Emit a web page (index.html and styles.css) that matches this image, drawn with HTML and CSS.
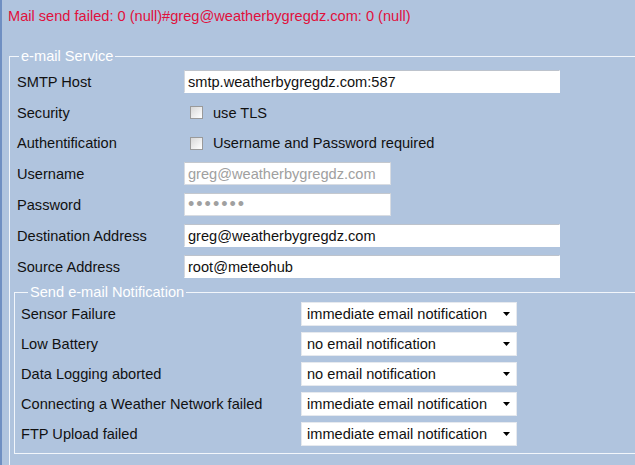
FILE: index.html
```html
<!DOCTYPE html>
<html>
<head>
<meta charset="utf-8">
<link rel="stylesheet" href="styles.css">
</head>
<body>
<div class="page">
  <p class="error">Mail send failed: 0 (null)#greg@weatherbygregdz.com: 0 (null)</p>
  <fieldset class="service">
    <legend>e-mail Service</legend>
    <div class="grid">
      <label class="lbl">SMTP Host</label>
      <div class="ctl"><input class="txt wide" type="text" value="smtp.weatherbygregdz.com:587"></div>

      <label class="lbl">Security</label>
      <div class="ctl"><input class="cb" type="checkbox"><span class="cbtext">use TLS</span></div>

      <label class="lbl">Authentification</label>
      <div class="ctl"><input class="cb" type="checkbox"><span class="cbtext">Username and Password required</span></div>

      <label class="lbl">Username</label>
      <div class="ctl"><input class="txt narrow dis" type="text" value="greg@weatherbygregdz.com" disabled></div>

      <label class="lbl">Password</label>
      <div class="ctl"><input class="txt narrow dis pw" type="password" value="1234567" disabled></div>

      <label class="lbl">Destination Address</label>
      <div class="ctl"><input class="txt wide" type="text" value="greg@weatherbygregdz.com"></div>

      <label class="lbl">Source Address</label>
      <div class="ctl"><input class="txt wide" type="text" value="root@meteohub"></div>
    </div>

    <fieldset class="notify">
      <legend>Send e-mail Notification</legend>
      <div class="ngrid">
        <span class="lbl">Sensor Failure</span>
        <div class="sel"><span>immediate email notification</span><svg class="arr" width="7" height="4" viewBox="0 0 7 4"><path d="M0 0h7L3.5 4z" fill="#000"/></svg></div>

        <span class="lbl">Low Battery</span>
        <div class="sel"><span>no email notification</span><svg class="arr" width="7" height="4" viewBox="0 0 7 4"><path d="M0 0h7L3.5 4z" fill="#000"/></svg></div>

        <span class="lbl">Data Logging aborted</span>
        <div class="sel"><span>no email notification</span><svg class="arr" width="7" height="4" viewBox="0 0 7 4"><path d="M0 0h7L3.5 4z" fill="#000"/></svg></div>

        <span class="lbl">Connecting a Weather Network failed</span>
        <div class="sel"><span>immediate email notification</span><svg class="arr" width="7" height="4" viewBox="0 0 7 4"><path d="M0 0h7L3.5 4z" fill="#000"/></svg></div>

        <span class="lbl">FTP Upload failed</span>
        <div class="sel"><span>immediate email notification</span><svg class="arr" width="7" height="4" viewBox="0 0 7 4"><path d="M0 0h7L3.5 4z" fill="#000"/></svg></div>
      </div>
    </fieldset>
  </fieldset>
</div>
</body>
</html>
```

FILE: styles.css
```css
html, body {
  margin: 0;
  padding: 0;
  background: #b0c4de;
  overflow: hidden;
  width: 635px;
  height: 465px;
}

.page {
  box-sizing: border-box;
  height: 465px;
  border-left: 2px solid #6f8fc2;
  padding: 8px 0 0 6px;
  font-family: "Liberation Sans", Arial, sans-serif;
  font-size: 14.6px;
  color: #111;
}

.error {
  margin: 0 0 24px 0;
  line-height: 16px;
  color: #e0103c;
  white-space: nowrap;
}

fieldset {
  border: 1px solid #f2f6fb;
  margin: 0;
}

legend {
  color: #fff;
  padding: 0 2px;
  line-height: 16px;
}

.service {
  margin-left: 1px;
  width: 700px;
  padding: 6px 0 20px 4px;
}

.service > legend {
  margin-left: 5px;
}

.grid {
  display: grid;
  grid-template-columns: 167px 1fr;
  grid-template-rows: 23px 23px 22px 23px 23px 23px 23px;
  row-gap: 8px;
  padding-left: 3px;
  align-items: center;
}

.lbl {
  line-height: 16px;
  white-space: nowrap;
}

.ctl {
  display: flex;
  align-items: center;
  height: 23px;
}

.txt {
  box-sizing: border-box;
  height: 23px;
  border: 1px solid #fff;
  border-top-color: #bdc3cc;
  border-left-color: #d4d8de;
  background: #fff;
  font-family: "Liberation Sans", Arial, sans-serif;
  font-size: 14.6px;
  color: #111;
  padding: 0 3px;
  margin: 0;
  outline: none;
}

.wide { width: 376px; }
.narrow { width: 207px; }

.dis {
  color: #a0a0a0;
  border-color: #d8dce2;
  border-top-color: #c4c8ce;
}

.pw {
  letter-spacing: 2px;
  font-size: 18px;
}

.cb {
  appearance: none;
  -webkit-appearance: none;
  box-sizing: border-box;
  width: 13px;
  height: 13px;
  margin: 0 0 0 6px;
  border: 1px solid #9a9a9a;
  background: linear-gradient(135deg, #d8d8d8 0%, #f4f4f4 70%, #ffffff 100%);
}

.cbtext {
  margin-left: 10px;
}

.notify {
  margin: 6px 0 0 0;
  width: 700px;
  padding: 2px 0 7px 6px;
}

.notify > legend {
  margin-left: 7px;
}

.ngrid {
  display: grid;
  grid-template-columns: 280px 216px;
  grid-auto-rows: 24px;
  row-gap: 6px;
  align-items: center;
}

.sel {
  box-sizing: border-box;
  height: 24px;
  width: 216px;
  background: #fff;
  border: 1px solid #e6e9ee;
  display: flex;
  align-items: center;
  justify-content: space-between;
  padding: 0 6px 0 5px;
  white-space: nowrap;
}

.arr {
  display: block;
}
```
